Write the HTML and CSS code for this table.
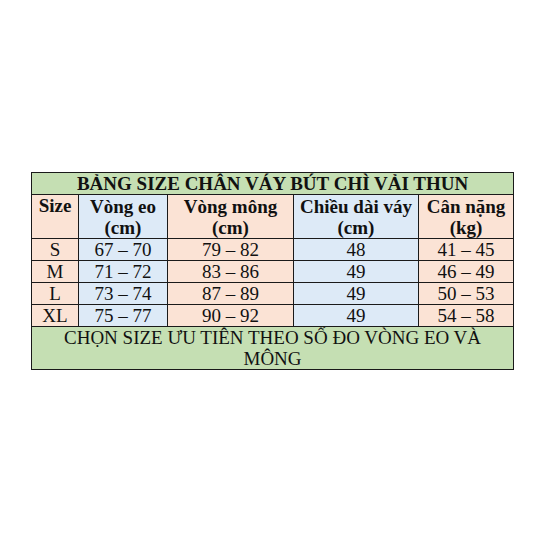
FILE: index.html
```html
<!DOCTYPE html>
<html>
<head>
<meta charset="utf-8">
<link rel="stylesheet" href="styles.css">
</head>
<body>
<div class="page">
<table class="size-table">
  <colgroup>
    <col class="c1"><col class="c2"><col class="c3"><col class="c4"><col class="c5">
  </colgroup>
  <tr class="title-row"><td colspan="5">BẢNG SIZE CHÂN VÁY BÚT CHÌ VẢI THUN</td></tr>
  <tr class="head-row">
    <td class="peach top">Size</td>
    <td class="blue">Vòng eo<br>(cm)</td>
    <td class="peach">Vòng mông<br>(cm)</td>
    <td class="blue">Chiều dài váy<br>(cm)</td>
    <td class="peach">Cân nặng<br>(kg)</td>
  </tr>
  <tr class="data-row"><td class="peach">S</td><td class="blue">67 – 70</td><td class="peach">79 – 82</td><td class="blue">48</td><td class="peach">41 – 45</td></tr>
  <tr class="data-row"><td class="peach">M</td><td class="blue">71 – 72</td><td class="peach">83 – 86</td><td class="blue">49</td><td class="peach">46 – 49</td></tr>
  <tr class="data-row"><td class="peach">L</td><td class="blue">73 – 74</td><td class="peach">87 – 89</td><td class="blue">49</td><td class="peach">50 – 53</td></tr>
  <tr class="data-row"><td class="peach">XL</td><td class="blue">75 – 77</td><td class="peach">90 – 92</td><td class="blue">49</td><td class="peach">54 – 58</td></tr>
  <tr class="foot-row"><td colspan="5">CHỌN SIZE ƯU TIÊN THEO SỐ ĐO VÒNG EO VÀ<br>MÔNG</td></tr>
</table>
</div>
</body>
</html>
```
FILE: styles.css
```css
html, body {
  margin: 0;
  padding: 0;
  background: #ffffff;
}
.page {
  padding-top: 172px;
  padding-left: 31px;
}
.size-table {
  border-collapse: collapse;
  table-layout: fixed;
  width: 482px;
  font-family: "Liberation Serif", "Times New Roman", serif;
  font-size: 19px;
  color: #111111;
}
.c1 { width: 47px; }
.c2 { width: 89px; }
.c3 { width: 126px; }
.c4 { width: 125px; }
.c5 { width: 95px; }
.size-table td {
  border: 1px solid #1a1a1a;
  padding: 0;
  text-align: center;
  vertical-align: middle;
  line-height: 20px;
  white-space: nowrap;
  overflow: hidden;
}
.peach { background: #fbe3d5; }
.blue { background: #ddeaf7; }
.title-row td {
  background: #c5dfb3;
  font-weight: bold;
  height: 21px;
}
.head-row td {
  font-weight: bold;
  height: 43px;
  line-height: 21px;
}
.head-row td.top {
  vertical-align: top;
}
.data-row td {
  height: 21px;
}
.foot-row td {
  background: #c5dfb3;
  height: 42px;
  line-height: 21px;
}
```
